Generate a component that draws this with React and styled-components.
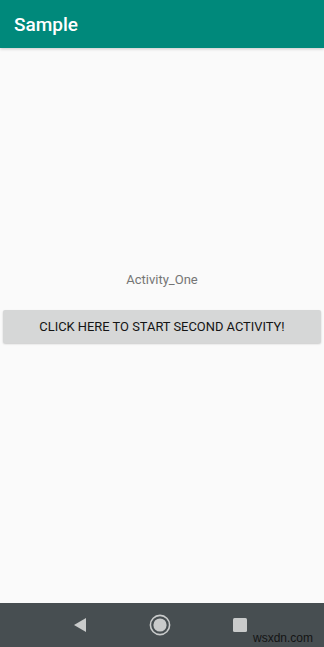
import React from "react";
import { styled, createGlobalStyle } from "styled-components";

const Global = createGlobalStyle`
  html, body, #root {
    margin: 0;
    padding: 0;
    height: 100%;
  }
  body {
    font-family: Roboto, "Liberation Sans", sans-serif;
    background: #fafafa;
  }
`;

const Screen = styled.div`
  width: 324px;
  height: 647px;
  display: flex;
  flex-direction: column;
  background: #fafafa;
  overflow: hidden;
`;

const AppBar = styled.div`
  height: 48px;
  flex-shrink: 0;
  background: #00897b;
  display: flex;
  align-items: center;
  padding-left: 14px;
  color: #ffffff;
  font-size: 19px;
  font-weight: 500;
  box-shadow: 0 1px 3px rgba(0, 0, 0, 0.2);
`;

const Content = styled.div`
  flex: 1;
  display: flex;
  flex-direction: column;
  align-items: center;
  padding-top: 224px;
`;

const Label = styled.div`
  font-size: 13px;
  color: #757575;
  line-height: 16px;
  margin-bottom: 22px;
`;

const Button = styled.button`
  width: 318px;
  height: 33px;
  border: none;
  border-radius: 2px;
  background: #d6d7d7;
  color: #141414;
  font-family: Roboto, "Liberation Sans", sans-serif;
  font-size: 12.9px;
  font-weight: 400;
  text-transform: uppercase;
  box-shadow: 0 1px 2px rgba(0, 0, 0, 0.2);
`;

const NavBar = styled.div`
  height: 44px;
  flex-shrink: 0;
  background: #474e51;
  display: flex;
  align-items: center;
  justify-content: center;
  gap: 56px;
  position: relative;
  padding-right: 4px;
`;

const NavIcon = styled.svg`
  width: 24px;
  height: 24px;
  display: block;
`;

const Watermark = styled.span`
  position: absolute;
  right: 11px;
  bottom: 2px;
  font-family: "Liberation Sans", Arial, sans-serif;
  font-size: 12px;
  color: #141414;
`;

export default function App() {
  return (
    <>
      <Global />
      <Screen>
        <AppBar>Sample</AppBar>
        <Content>
          <Label>Activity_One</Label>
          <Button>Click here to start second activity!</Button>
        </Content>
        <NavBar>
          <NavIcon viewBox="0 0 24 24">
            <path d="M18 5 L18 19 L6 12 Z" fill="#c9cbcb" />
          </NavIcon>
          <NavIcon viewBox="0 0 24 24">
            <circle cx="12" cy="12" r="9.6" fill="none" stroke="#c9cbcb" strokeWidth="1.6" />
            <circle cx="12" cy="12" r="6.6" fill="#c9cbcb" />
          </NavIcon>
          <NavIcon viewBox="0 0 24 24">
            <rect x="5" y="5" width="14" height="14" rx="1.5" fill="#c9cbcb" />
          </NavIcon>
          <Watermark>wsxdn.com</Watermark>
        </NavBar>
      </Screen>
    </>
  );
}
